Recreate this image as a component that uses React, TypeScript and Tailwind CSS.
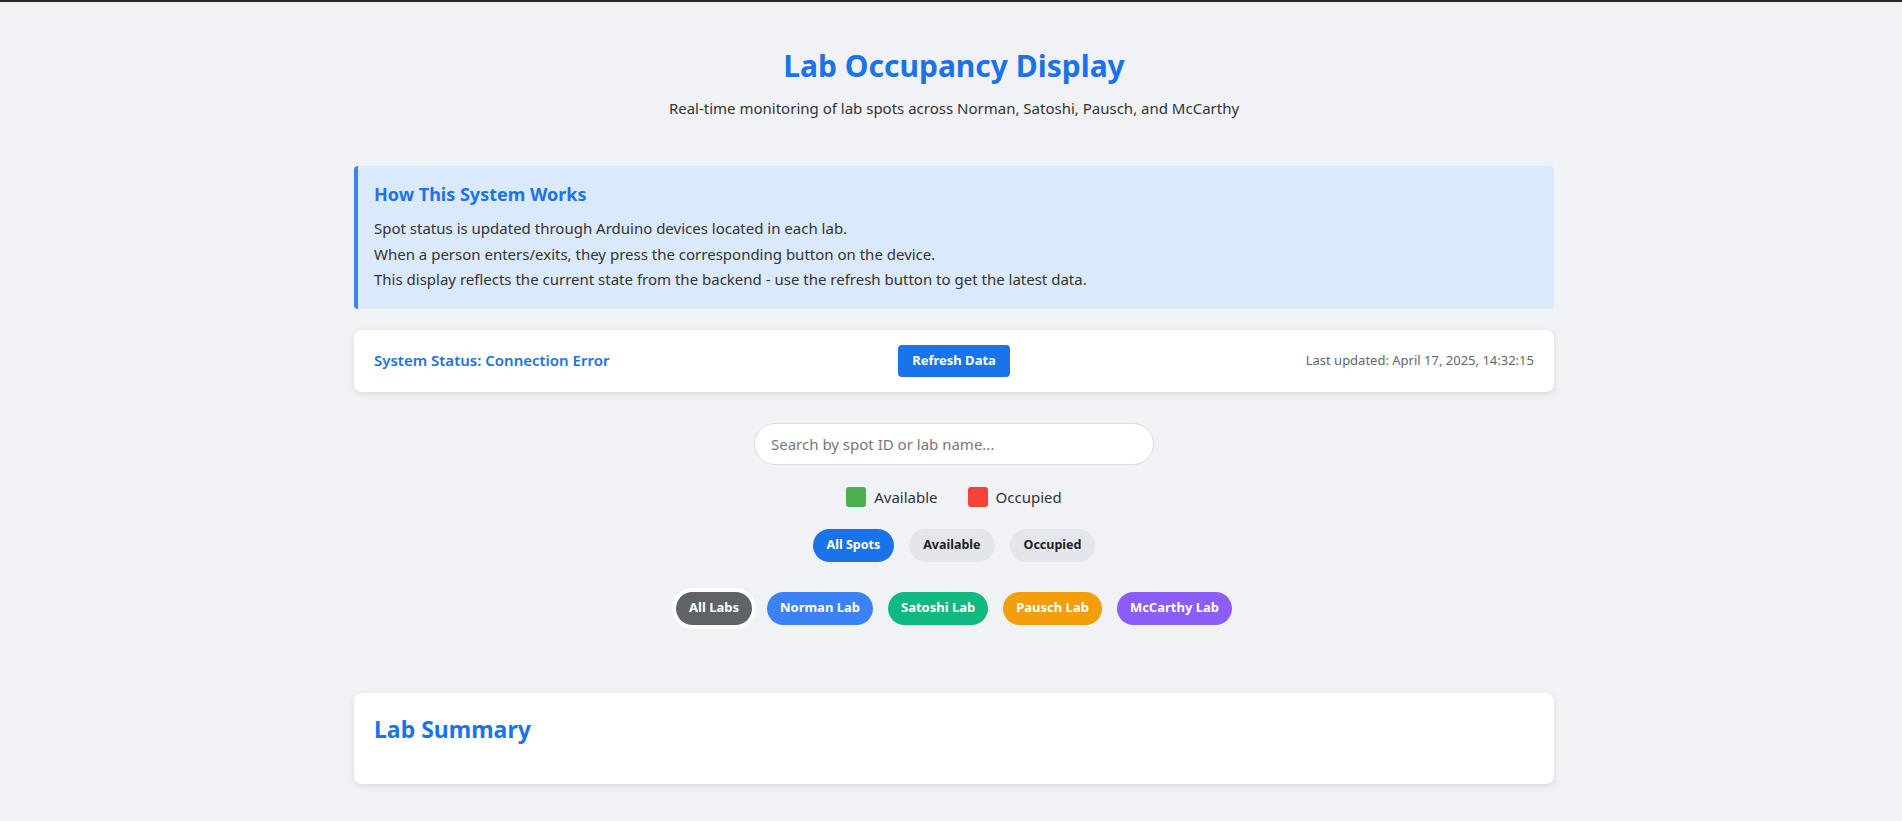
import React, { useState } from 'react';

const labs = [
    { name: 'All Labs', color: 'bg-[#5f6368]' },
    { name: 'Norman Lab', color: 'bg-[#3b82f6]' },
    { name: 'Satoshi Lab', color: 'bg-[#10b981]' },
    { name: 'Pausch Lab', color: 'bg-[#f59e0b]' },
    { name: 'McCarthy Lab', color: 'bg-[#8b5cf6]' },
];

const filters = ['All Spots', 'Available', 'Occupied'];

const App: React.FC = () => {
    const [filter, setFilter] = useState('All Spots');
    const [lab, setLab] = useState('All Labs');
    const [query, setQuery] = useState('');

    return (
        <div className="min-h-screen bg-[#f0f2f5] text-[#333] font-['Noto_Sans',sans-serif]">
            <div className="h-[2px] bg-[#2b2b2b]" />
            <div className="pl-[6px]">
                <div className="w-[1200px] mx-auto">
                    <header className="pt-[45px] text-center">
                        <h1 className="text-[30px] leading-[38px] font-bold text-[#1a73e8]">Lab Occupancy Display</h1>
                        <p className="mt-[11px] text-[15px] leading-6">
                            Real-time monitoring of lab spots across Norman, Satoshi, Pausch, and McCarthy
                        </p>
                    </header>

                    {/* how it works */}
                    <section className="mt-[46px] rounded border-l-4 border-[#3b82f6] bg-[#dbe9fd] p-4">
                        <h3 className="text-[18px] leading-[24px] font-bold text-[#1a73e8]">How This System Works</h3>
                        <div className="mt-[10px] text-[15px] leading-[25.5px]">
                            <p>Spot status is updated through Arduino devices located in each lab.</p>
                            <p>When a person enters/exits, they press the corresponding button on the device.</p>
                            <p>This display reflects the current state from the backend - use the refresh button to get the latest data.</p>
                        </div>
                    </section>

                    <section className="mt-[21px] flex items-center justify-between rounded-lg bg-white px-5 py-[15px] shadow-[0_2px_6px_rgba(0,0,0,0.1)]">
                        <div className="w-[300px] text-[15px] font-semibold text-[#1a73e8]">System Status: Connection Error</div>
                        <button className="h-8 rounded bg-[#1a73e8] px-[14px] text-[13px] font-bold text-white">Refresh Data</button>
                        <div className="w-[300px] text-right text-[13px] text-[#666]">Last updated: April 17, 2025, 14:32:15</div>
                    </section>

                    <div className="mt-[31px] flex justify-center">
                        <input
                            value={query}
                            onChange={(e) => setQuery(e.target.value)}
                            placeholder="Search by spot ID or lab name..."
                            className="h-[42px] w-[400px] rounded-full border border-[#ddd] bg-white px-4 text-[15px] outline-none placeholder:text-[#777]"
                        />
                    </div>

                    <div className="mt-5 flex justify-center gap-[30px] text-[15px] leading-6">
                        <div className="flex items-center gap-2">
                            <span className="h-5 w-5 rounded-[3px] bg-[#4caf50]" />
                            Available
                        </div>
                        <div className="flex items-center gap-2">
                            <span className="h-5 w-5 rounded-[3px] bg-[#f44336]" />
                            Occupied
                        </div>
                    </div>

                    <div className="mt-[20px] flex justify-center gap-[15px]">
                        {filters.map((f) => (
                            <button
                                key={f}
                                onClick={() => setFilter(f)}
                                className={
                                    filter === f
                                        ? 'h-[33px] rounded-full bg-[#1a73e8] px-[14px] text-[12.5px] font-bold text-white'
                                        : 'h-[33px] rounded-full bg-[#e4e6eb] px-[14px] text-[12.5px] font-bold text-[#222]'
                                }
                            >
                                {f}
                            </button>
                        ))}
                    </div>

                    <div className="mt-[30px] flex justify-center gap-[15px]">
                        {labs.map((l) => (
                            <button
                                key={l.name}
                                onClick={() => setLab(l.name)}
                                className={`h-[33px] rounded-full px-[13px] text-[13px] font-bold text-white ${l.color} ${
                                    lab === l.name ? 'ring-4 ring-white' : ''
                                }`}
                            >
                                {l.name}
                            </button>
                        ))}
                    </div>

                    <section className="mt-[68px] rounded-lg bg-white px-5 pt-[22px] pb-[40px] shadow-[0_2px_6px_rgba(0,0,0,0.1)]">
                        <h2 className="text-[23px] leading-[29px] font-bold text-[#1a73e8]">Lab Summary</h2>
                    </section>
                </div>
            </div>
        </div>
    );
};

export default App;
